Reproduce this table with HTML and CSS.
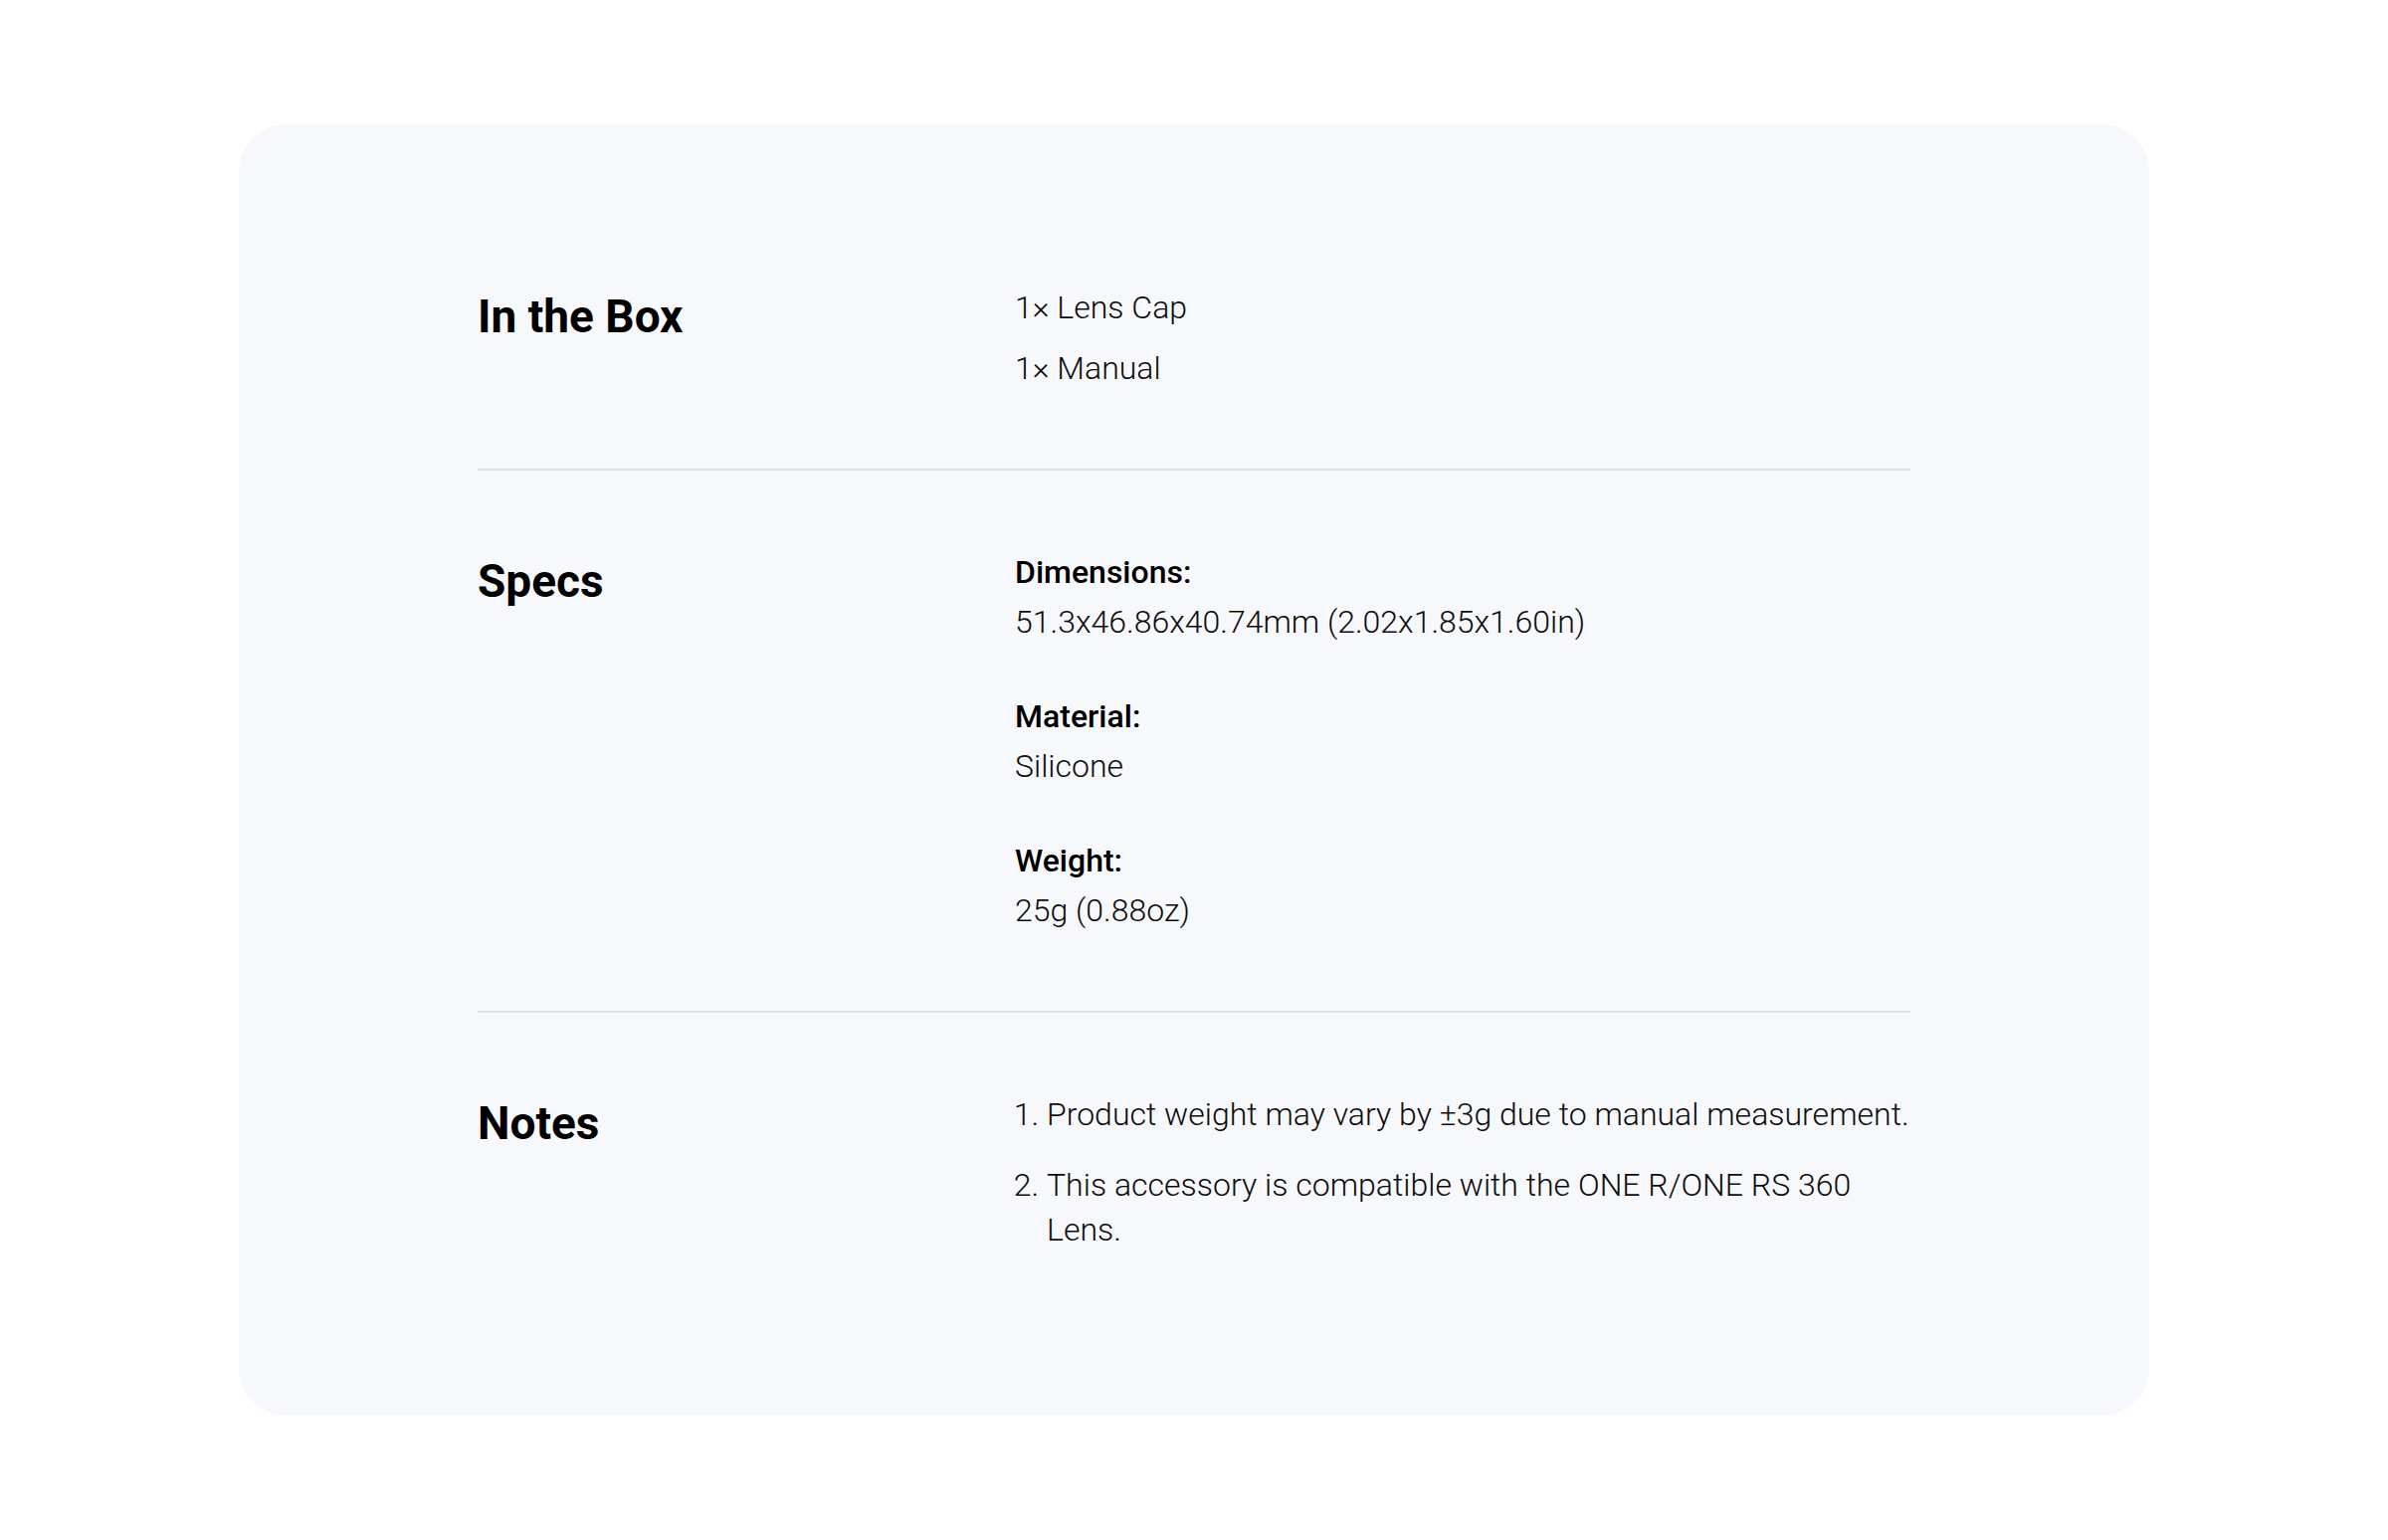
FILE: index.html
```html
<!DOCTYPE html>
<html lang="en">
<head>
  <meta charset="UTF-8" />
  <meta name="viewport" content="width=device-width, initial-scale=1.0"/>
  <title>Lens Cap - Specs</title>
  <link rel="stylesheet" href="styles.css">
</head>
<body>

  <main class="page">
    <div class="spec-card">

      <!-- In the Box -->
      <section class="spec-row">
        <h2 class="spec-title">In the Box</h2>
        <ul class="box-list">
          <li>1× Lens Cap</li>
          <li>1× Manual</li>
        </ul>
      </section>

      <!-- Specs -->
      <section class="spec-row">
        <h2 class="spec-title">Specs</h2>
        <div class="spec-list">
          <div class="spec-item">
            <p class="spec-label">Dimensions:</p>
            <p class="spec-value">51.3x46.86x40.74mm (2.02x1.85x1.60in)</p>
          </div>
          <div class="spec-item">
            <p class="spec-label">Material:</p>
            <p class="spec-value">Silicone</p>
          </div>
          <div class="spec-item">
            <p class="spec-label">Weight:</p>
            <p class="spec-value">25g (0.88oz)</p>
          </div>
        </div>
      </section>

      <!-- Notes -->
      <section class="spec-row">
        <h2 class="spec-title">Notes</h2>
        <ol class="notes-list">
          <li>Product weight may vary by ±3g due to manual measurement.</li>
          <li>This accessory is compatible with the ONE R/ONE RS 360 Lens.</li>
        </ol>
      </section>

    </div>
  </main>

</body>
</html>
```

FILE: styles.css
```css
body {
  font-family: 'Roboto', 'Liberation Sans', sans-serif;
  margin: 0;
  padding: 0;
  background-color: #fff;
  color: #0d0d0d;
}

.page {
  padding-top: 125px;
}

.spec-card {
  width: 1920px;
  margin: 0 auto;
  box-sizing: border-box;
  padding: 82px 240px 84px;
  background-color: #f7f8fb;
  border-radius: 48px;
}

.spec-row {
  display: grid;
  grid-template-columns: 540px 900px;
  align-items: start;
  padding: 80px 0 78px;
  border-bottom: 2px solid #e0e1e5;
}

.spec-row:last-child {
  border-bottom: none;
  padding-bottom: 80px;
}

.spec-title {
  margin: 0;
  font-size: 46px;
  line-height: 62px;
  font-weight: 700;
  color: #000;
}

.box-list,
.notes-list {
  margin: 0;
  font-size: 32px;
  line-height: 45px;
  font-weight: 300;
}

.box-list {
  list-style: none;
  padding: 0;
}

.box-list li + li {
  margin-top: 16px;
}

.notes-list {
  padding-left: 32px;
  margin-right: -14px;
}

.notes-list li + li {
  margin-top: 26px;
}

.spec-item + .spec-item {
  margin-top: 50px;
}

.spec-label,
.spec-value {
  margin: 0;
  font-size: 32px;
  line-height: 45px;
}

.spec-label {
  font-weight: 500;
  color: #000;
  margin-bottom: 5px;
}

.spec-value {
  font-weight: 300;
}
```
